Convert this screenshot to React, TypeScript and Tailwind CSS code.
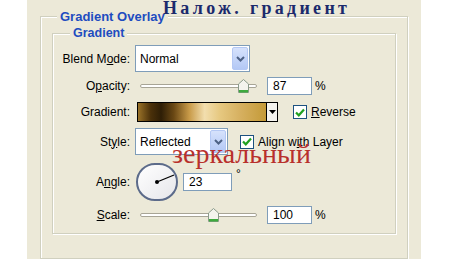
import React from "react";

const Chevron = () => (
  <svg width="9" height="6" viewBox="0 0 9 6">
    <path d="M1 1 L4.5 4.5 L8 1" fill="none" stroke="#4D6185" strokeWidth="2" />
  </svg>
);

const Dropdown = ({ value, w }: { value: string; w: string }) => (
  <div className={`${w} h-[27px] bg-white border border-[#7F9DB9] flex items-center`}>
    <span className="flex-1 pl-[4px] text-[12px] text-black">{value}</span>
    <div className="w-[16px] h-[23px] mr-[1px] rounded-[2px] border border-[#B4C8F4] bg-gradient-to-b from-[#D6E2FC] to-[#B3C8F5] flex items-center justify-center">
      <Chevron />
    </div>
  </div>
);

const Thumb = () => (
  <svg width="11" height="14" viewBox="0 0 11 14">
    <path d="M0.5 5 L5.5 0.5 L10.5 5 L10.5 13.5 L0.5 13.5 Z" fill="#F4F4EE" stroke="#8A9A8A" />
    <rect x="1" y="11" width="9" height="2.5" fill="#3EAA3E" />
  </svg>
);

const Slider = ({ pos }: { pos: number }) => (
  <div className="relative w-[127px] h-[18px] flex items-center px-[5px]">
    <div className="w-full h-[4px] rounded-full border border-[#A8A596] bg-white" />
    <div className="absolute top-[2px]" style={{ left: pos }}>
      <Thumb />
    </div>
  </div>
);

const Input = ({ value, w }: { value: string; w: string }) => (
  <div className={`${w} h-[18px] bg-white border border-[#7F9DB9] flex items-center pl-[5px] text-[12px] text-black`}>
    {value}
  </div>
);

const Check = () => (
  <div className="w-[14px] h-[14px] bg-white border border-[#1C5180] flex items-center justify-center">
    <svg width="10" height="9" viewBox="0 0 10 9">
      <path d="M1 4.5 L3.8 7.3 L9 1.5" fill="none" stroke="#21A121" strokeWidth="2.2" />
    </svg>
  </div>
);

const Label = ({ children }: { children: React.ReactNode }) => (
  <div className="w-[77px] text-right text-[12px] text-black shrink-0">{children}</div>
);

export default function App() {
  return (
    <div className="w-[450px] h-[259px] overflow-hidden bg-white flex font-['Liberation_Sans',Arial,sans-serif]">
      <div className="relative ml-[27px] w-[394px] h-full bg-[#ECE9D8] flex flex-col">
        <div className="relative z-10 h-[16px] pl-[136px] leading-[17px] text-[18px] font-bold tracking-[3.3px] text-[#1B2A6C] whitespace-nowrap font-['Liberation_Serif','Times_New_Roman',serif]">
          Налож. градиент
        </div>
        <div className="mx-[13px] h-[260px] border border-[#D0D0BF] shadow-[inset_1px_1px_0_#fff,1px_1px_0_#fff] pt-[16px] px-[11px]">
          <div className="border border-[#D0D0BF] shadow-[inset_1px_1px_0_#fff,1px_1px_0_#fff] pt-[11px] pb-[9px] flex flex-col">
            <div className="flex items-center h-[27px]">
              <Label>
                Blend M<span className="underline">o</span>de:
              </Label>
              <div className="ml-[5px]">
                <Dropdown value="Normal" w="w-[115px]" />
              </div>
            </div>

            <div className="flex items-center h-[18px] mt-[5px]">
              <Label>
                O<span className="underline">p</span>acity:
              </Label>
              <div className="ml-[5px]">
                <Slider pos={103} />
              </div>
              <div className="ml-[5px]">
                <Input value="87" w="w-[45px]" />
              </div>
              <span className="ml-[3px] text-[12px] text-black">%</span>
            </div>

            <div className="flex items-center h-[20px] mt-[7px]">
              <Label>Gradient:</Label>
              <div className="ml-[7px] w-[141px] h-[20px] border border-black flex">
                <div className="flex-1 bg-[linear-gradient(to_right,#9A7228_0%,#4A300A_10%,#2E1E06_18%,#6A4814_28%,#C89A48_40%,#F2DEAE_52%,#E6C880_64%,#D6B060_80%,#C49A38_100%)]" />
                <div className="w-[11px] border-l border-black bg-[#F4F3EE] flex items-center justify-center">
                  <svg width="7" height="4" viewBox="0 0 7 4">
                    <path d="M0 0 L7 0 L3.5 4 Z" fill="#000" />
                  </svg>
                </div>
              </div>
              <div className="ml-[15px]">
                <Check />
              </div>
              <span className="ml-[4px] text-[12px] text-black">
                <span className="underline">R</span>everse
              </span>
            </div>

            <div className="flex items-center h-[27px] mt-[6px]">
              <Label>
                St<span className="underline">y</span>le:
              </Label>
              <div className="ml-[5px]">
                <Dropdown value="Reflected" w="w-[93px]" />
              </div>
              <div className="ml-[12px]">
                <Check />
              </div>
              <span className="ml-[4px] text-[12px] text-black">
                Align w<span className="underline">i</span>th Layer
              </span>
            </div>

            <div className="flex items-center h-[38px] mt-[8px]">
              <Label>
                A<span className="underline">n</span>gle:
              </Label>
              <div className="ml-[6px] w-[42px] h-[38px] rounded-full border-2 border-[#5C6B8A] bg-gradient-to-br from-[#FFFFFF] to-[#E6E6EA] relative">
                <svg className="absolute inset-0" width="38" height="34" viewBox="0 0 38 34">
                  <line x1="19" y1="17" x2="36" y2="10" stroke="#000" strokeWidth="1.3" />
                  <circle cx="19" cy="17" r="2" fill="#000" />
                </svg>
              </div>
              <div className="ml-[5px]">
                <Input value="23" w="w-[49px]" />
              </div>
              <span className="ml-[4px] self-start mt-[5px] text-[12px] leading-[12px] text-black">°</span>
            </div>

            <div className="flex items-center h-[18px] mt-[5px]">
              <Label>
                <span className="underline">S</span>cale:
              </Label>
              <div className="ml-[5px]">
                <Slider pos={73} />
              </div>
              <div className="ml-[5px]">
                <Input value="100" w="w-[45px]" />
              </div>
              <span className="ml-[3px] text-[12px] text-black">%</span>
            </div>
          </div>
        </div>

        <span className="absolute left-[30px] top-[10px] px-[3px] bg-[#ECE9D8] text-[13px] leading-[14px] font-bold text-[#1E4CC0] whitespace-nowrap">
          Gradient Overlay
        </span>
        <span className="absolute left-[43px] top-[26px] px-[3px] bg-[#ECE9D8] text-[12.5px] leading-[14px] font-bold text-[#1E4CC0] whitespace-nowrap">
          Gradient
        </span>

        <div className="absolute left-[145px] top-[140px] text-[28px] leading-[28px] text-[#B8302C] whitespace-nowrap font-['Liberation_Serif','Times_New_Roman',serif]">
          зеркальный
        </div>
      </div>
    </div>
  );
}
